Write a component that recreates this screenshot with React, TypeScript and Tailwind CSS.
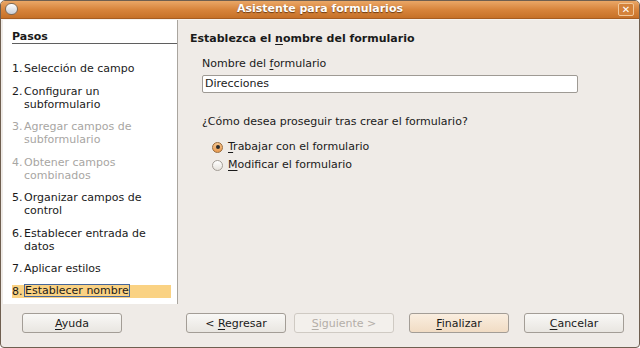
import React from 'react';

// Form wizard dialog (Ubuntu Human theme look)
const STEPS = [
  { n: 1, label: 'Selección de campo' },
  { n: 2, label: 'Configurar un subformulario' },
  { n: 3, label: 'Agregar campos de subformulario', disabled: true },
  { n: 4, label: 'Obtener campos combinados', disabled: true },
  { n: 5, label: 'Organizar campos de control' },
  { n: 6, label: 'Establecer entrada de datos' },
  { n: 7, label: 'Aplicar estilos' },
  { n: 8, label: 'Establecer nombre', active: true },
];

const font = { fontFamily: '"DejaVu Sans", Verdana, sans-serif' };

function Mn({ children }: { children: React.ReactNode }) {
  return <span className="underline underline-offset-2">{children}</span>;
}

function Button({
  children,
  disabled,
  primary,
  className = '',
}: {
  children: React.ReactNode;
  disabled?: boolean;
  primary?: boolean;
  className?: string;
}) {
  return (
    <button
      className={`h-[20px] w-[100px] rounded-[3px] border text-[11px] leading-none ${
        disabled
          ? 'border-[#cfcac3] bg-[#f3f0ec] text-[#b3aea8]'
          : primary
          ? 'border-[#a39d96] bg-gradient-to-b from-[#faeee0] to-[#f1dcc4] text-[#1a1a1a]'
          : 'border-[#a39d96] bg-gradient-to-b from-[#f9f8f6] to-[#e9e6e1] text-[#1a1a1a]'
      } ${className}`}
    >
      {children}
    </button>
  );
}

function Radio({ checked, children }: { checked?: boolean; children: React.ReactNode }) {
  return (
    <div className="flex items-center h-[18px]">
      <span
        className={`w-[11px] h-[11px] rounded-full border flex items-center justify-center ${
          checked
            ? 'border-[#9a6b3b] bg-gradient-to-b from-[#f6c58e] to-[#e89a4f]'
            : 'border-[#a39d96] bg-gradient-to-b from-white to-[#e6e2dc]'
        }`}
      >
        {checked && <span className="w-[4px] h-[4px] rounded-full bg-[#2b2b2b]" />}
      </span>
      <span className="ml-[5px] text-[11px] text-[#1a1a1a]">{children}</span>
    </div>
  );
}

export default function App() {
  return (
    <div className="w-[640px] h-[348px] bg-white" style={font}>
      <div className="w-full h-full flex flex-col rounded-t-[5px] rounded-b-[4px] border border-[#6f5f50] overflow-hidden bg-[#efebe7]">
        {/* title bar */}
        <div className="h-[18px] relative flex items-center justify-center bg-gradient-to-b from-[#eaa766] via-[#d8853c] to-[#c67128] border-b border-[#a65d22]">
          <span className="absolute left-[4px] top-[2px] w-[13px] h-[12px] rounded-full bg-gradient-to-b from-white to-[#c9ced6] border border-[#7e6a56]" />
          <span className="text-[11px] font-bold text-white [text-shadow:0_1px_1px_#6b3a10]">
            Asistente para formularios
          </span>
          <span className="absolute right-[5px] top-[2px] w-[16px] h-[13px] rounded-[2px] border border-[#f1c89a] bg-[#d4823a] flex items-center justify-center text-white text-[10px] font-bold leading-none">
            ✕
          </span>
        </div>

        <div className="flex-1 flex flex-col">
          <div className="flex h-[285px] border-t border-[#f6f3ef]">
            {/* steps */}
            <div className="ml-[2px] w-[175px] bg-white border-r border-[#a9a59f] pt-[10px] text-[11px]">
              <div className="ml-[9px] border-b border-[#5f5f5f] font-bold text-[#1a1a1a] leading-[13px]">Pasos</div>
              <div className="mt-[18px] flex flex-col gap-[9.5px] leading-[13px]">
                {STEPS.map((s) => (
                  <div
                    key={s.n}
                    className={`ml-[9px] mr-[6px] flex ${s.active ? 'bg-[#fad283]' : ''} ${
                      s.disabled ? 'text-[#a8a6a3]' : 'text-[#1a1a1a]'
                    }`}
                  >
                    <span className="w-[12px] shrink-0">{s.n}.</span>
                    {s.active ? (
                      <span className="border border-[#46669a] -my-px leading-[11px] h-[13px]">{s.label}</span>
                    ) : (
                      <span className="w-[130px]">{s.label}</span>
                    )}
                  </div>
                ))}
              </div>
            </div>

            {/* page */}
            <div className="flex-1 pl-[12px] pt-[12px] text-[11px] text-[#1a1a1a]">
              <div className="font-bold leading-[14px]">
                Establezca el <Mn>n</Mn>ombre del formulario
              </div>
              <div className="pl-[12px]">
                <div className="mt-[11px] leading-[14px]">
                  Nombre del <Mn>f</Mn>ormulario
                </div>
                <div className="mt-[4px] w-[376px] h-[18px] bg-white border border-[#9e9a94] rounded-[2px] flex items-center px-[2px]">
                  Direcciones
                </div>
                <div className="mt-[22px] leading-[14px]">¿Cómo desea proseguir tras crear el formulario?</div>
                <div className="mt-[9px] pl-[10px]">
                  <Radio checked>
                    <Mn>T</Mn>rabajar con el formulario
                  </Radio>
                  <Radio>
                    <Mn>M</Mn>odificar el formulario
                  </Radio>
                </div>
              </div>
            </div>
          </div>

          {/* buttons */}
          <div className="flex items-center pt-[9px] pl-[21px]">
            <Button>
              <Mn>A</Mn>yuda
            </Button>
            <Button className="ml-[64px]">
              &lt; <Mn>R</Mn>egresar
            </Button>
            <Button disabled className="ml-[8px]">
              <Mn>S</Mn>iguiente &gt;
            </Button>
            <Button primary className="ml-[15px]">
              <Mn>F</Mn>inalizar
            </Button>
            <Button className="ml-[15px]">
              <Mn>C</Mn>ancelar
            </Button>
          </div>
        </div>
      </div>
    </div>
  );
}
